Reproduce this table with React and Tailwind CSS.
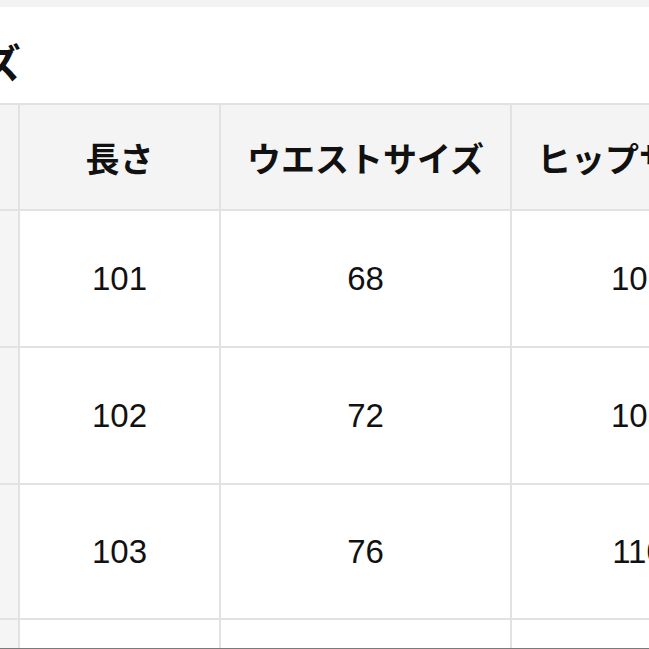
export default function App() {
  const jp = { fontFamily: '"Noto Sans CJK JP", "Noto Sans", sans-serif' };
  const num = { fontFamily: '"Liberation Sans", Arial, sans-serif' };
  const rows = [
    { h: 'h-[135px]', a: '101', b: '68', c: '106' },
    { h: 'h-[135px]', a: '102', b: '72', c: '108' },
    { h: 'h-[133px]', a: '103', b: '76', c: '110' },
  ];
  return (
    <div className="w-[649px] h-[649px] overflow-hidden bg-white flex flex-col">
      <div className="h-[7px] bg-[#f3f3f3] shrink-0" />
      <div className="h-[96px] shrink-0 bg-white flex items-center overflow-hidden">
        <span
          className="ml-[-98px] mt-[12px] text-[40px] font-bold leading-none text-[#111] whitespace-nowrap"
          style={jp}
        >
          サイズ
        </span>
      </div>
      <div className="flex-1 min-h-0 overflow-hidden bg-[#e2e2e2] pt-[2px]">
        <div className="grid grid-cols-[18px_199px_289px_253px] gap-[2px] w-[765px]">
          <div className="h-[104px] bg-[#f4f4f4]" />
          <div className="h-[104px] bg-[#f4f4f4] flex items-center justify-center text-[34px] font-bold text-[#111]" style={jp}>長さ</div>
          <div className="h-[104px] bg-[#f4f4f4] flex items-center justify-center text-[34px] font-bold text-[#111]" style={jp}>ウエストサイズ</div>
          <div className="h-[104px] bg-[#f4f4f4] flex items-center justify-center text-[34px] font-bold text-[#111] whitespace-nowrap" style={jp}>ヒップサイズ</div>
          {rows.map((r, i) => (
            <>
              <div key={`a${i}`} className={`${r.h} bg-[#f5f5f5]`} />
              <div key={`b${i}`} className={`${r.h} bg-white flex items-center justify-center text-[33px] text-[#111]`} style={num}>{r.a}</div>
              <div key={`c${i}`} className={`${r.h} bg-white flex items-center justify-center text-[33px] text-[#111]`} style={num}>{r.b}</div>
              <div key={`d${i}`} className={`${r.h} bg-white flex items-center justify-center text-[33px] text-[#111]`} style={num}>{r.c}</div>
            </>
          ))}
          <div className="h-[40px] bg-[#f5f5f5]" />
          <div className="h-[40px] bg-white" />
          <div className="h-[40px] bg-white" />
          <div className="h-[40px] bg-white" />
        </div>
      </div>
      <div className="h-px bg-[#7a7a7a] shrink-0" />
    </div>
  );
}
